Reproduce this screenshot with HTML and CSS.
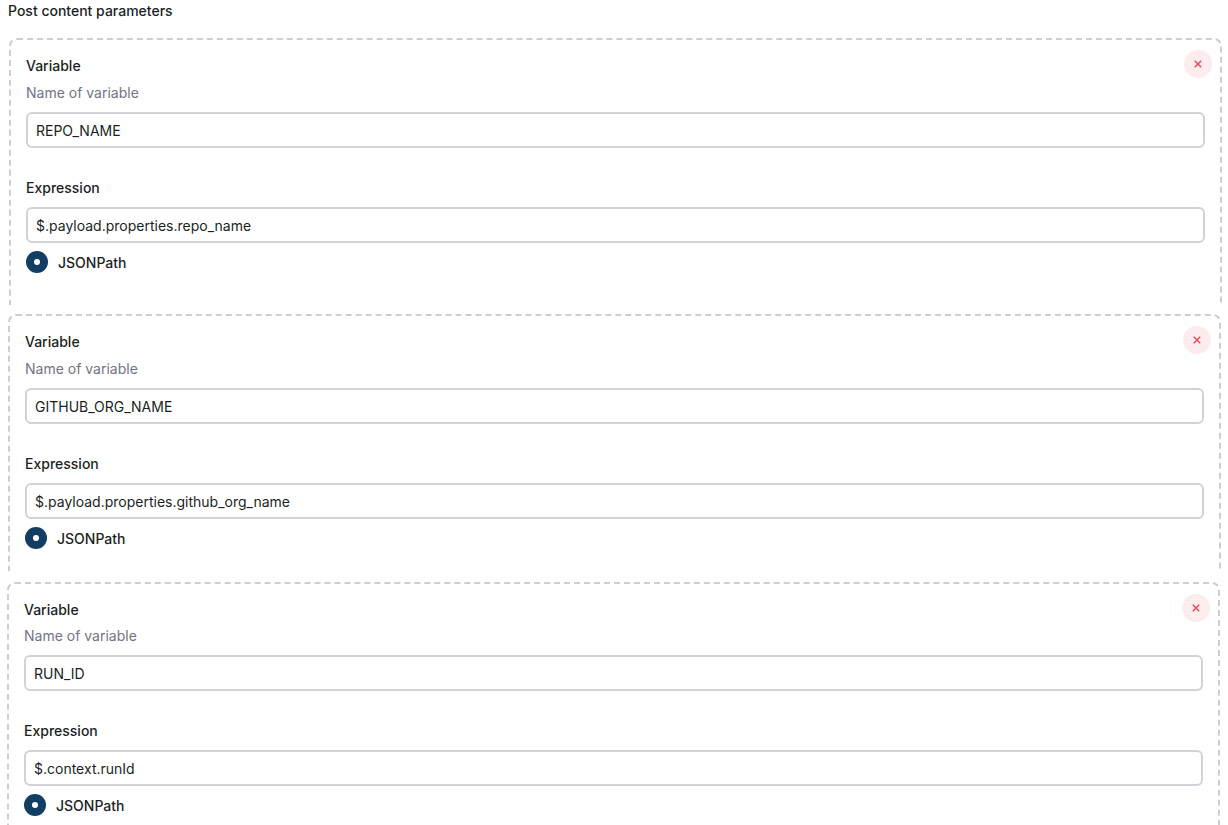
FILE: index.html
```html
<!DOCTYPE html>
<html lang="en">
<head>
  <meta charset="UTF-8">
  <meta name="viewport" content="width=device-width, initial-scale=1.0">
  <title>Post content parameters</title>
  <link rel="stylesheet" href="styles.css">
</head>
<body>
  <div class="page">
    <h3 class="section-title">Post content parameters</h3>

    <div class="param-list">
      <div class="param">
        <button class="remove" type="button" aria-label="Remove">
          <svg width="10" height="10" viewBox="0 0 10 10"><path d="M1.8 1.8l6.4 6.4M8.2 1.8l-6.4 6.4" /></svg>
        </button>
        <label class="field-label">Variable</label>
        <p class="field-help">Name of variable</p>
        <input class="text-input" type="text" value="REPO_NAME">
        <label class="field-label expr">Expression</label>
        <input class="text-input" type="text" value="$.payload.properties.repo_name">
        <div class="radio-row">
          <span class="radio checked"></span>
          <span>JSONPath</span>
        </div>
      </div>

      <div class="param">
        <button class="remove" type="button" aria-label="Remove">
          <svg width="10" height="10" viewBox="0 0 10 10"><path d="M1.8 1.8l6.4 6.4M8.2 1.8l-6.4 6.4" /></svg>
        </button>
        <label class="field-label">Variable</label>
        <p class="field-help">Name of variable</p>
        <input class="text-input" type="text" value="GITHUB_ORG_NAME">
        <label class="field-label expr">Expression</label>
        <input class="text-input" type="text" value="$.payload.properties.github_org_name">
        <div class="radio-row">
          <span class="radio checked"></span>
          <span>JSONPath</span>
        </div>
      </div>

      <div class="param">
        <button class="remove" type="button" aria-label="Remove">
          <svg width="10" height="10" viewBox="0 0 10 10"><path d="M1.8 1.8l6.4 6.4M8.2 1.8l-6.4 6.4" /></svg>
        </button>
        <label class="field-label">Variable</label>
        <p class="field-help">Name of variable</p>
        <input class="text-input" type="text" value="RUN_ID">
        <label class="field-label expr">Expression</label>
        <input class="text-input" type="text" value="$.context.runId">
        <div class="radio-row">
          <span class="radio checked"></span>
          <span>JSONPath</span>
        </div>
      </div>
    </div>
  </div>
</body>
</html>
```

FILE: styles.css
```css
body {
  margin: 0;
  font-family: Inter, "Noto Sans", sans-serif;
  font-size: 14px;
  color: #1b1f24;
  background: #fff;
  overflow: hidden;
}
.page {
  padding: 1px 0 0 0;
}
.section-title {
  margin: 0 0 17px 8px;
  font-size: 14px;
  font-weight: 500;
  line-height: 20px;
}
.param {
  position: relative;
  display: flex;
  flex-direction: column;
  margin: 0 6px 9px 9px;
  padding: 16px 15px 32px;
  border: 2px dashed #cbcfd4;
  border-bottom: none;
  border-radius: 8px 8px 0 0;
}
.param:nth-child(2) {
  margin-left: 8px;
  margin-right: 7px;
  padding-bottom: 22px;
  margin-bottom: 11px;
}
.param:nth-child(3) {
  margin-left: 7px;
  margin-right: 8px;
}
.field-label {
  font-weight: 500;
  line-height: 20px;
}
.field-label.expr {
  margin-top: 30px;
}
.field-help {
  margin: 7px 0 0;
  line-height: 20px;
  color: #737387;
}
.param:nth-child(3) .field-help {
  margin-top: 6px;
}
.text-input {
  box-sizing: border-box;
  height: 36px;
  margin-top: 9px;
  padding: 0 8px;
  border: 2px solid #cfd3d8;
  border-radius: 6px;
  font-family: inherit;
  font-size: 14px;
  color: #1b1f24;
  background: #fff;
  outline: none;
}
.radio-row {
  display: flex;
  align-items: center;
  gap: 10px;
  margin-top: 8px;
  height: 22px;
  font-weight: 500;
}
.radio {
  box-sizing: border-box;
  width: 22px;
  height: 22px;
  border-radius: 50%;
  background: #123e63;
  display: flex;
  align-items: center;
  justify-content: center;
}
.radio.checked::after {
  content: "";
  width: 6px;
  height: 6px;
  border-radius: 50%;
  background: #fff;
}
.remove {
  position: absolute;
  top: 10px;
  right: 8px;
  width: 28px;
  height: 28px;
  padding: 0;
  border: none;
  border-radius: 50%;
  background: #fdeced;
  display: flex;
  align-items: center;
  justify-content: center;
  cursor: pointer;
}
.remove svg path {
  stroke: #e5484d;
  stroke-width: 1.4;
  fill: none;
}
```
